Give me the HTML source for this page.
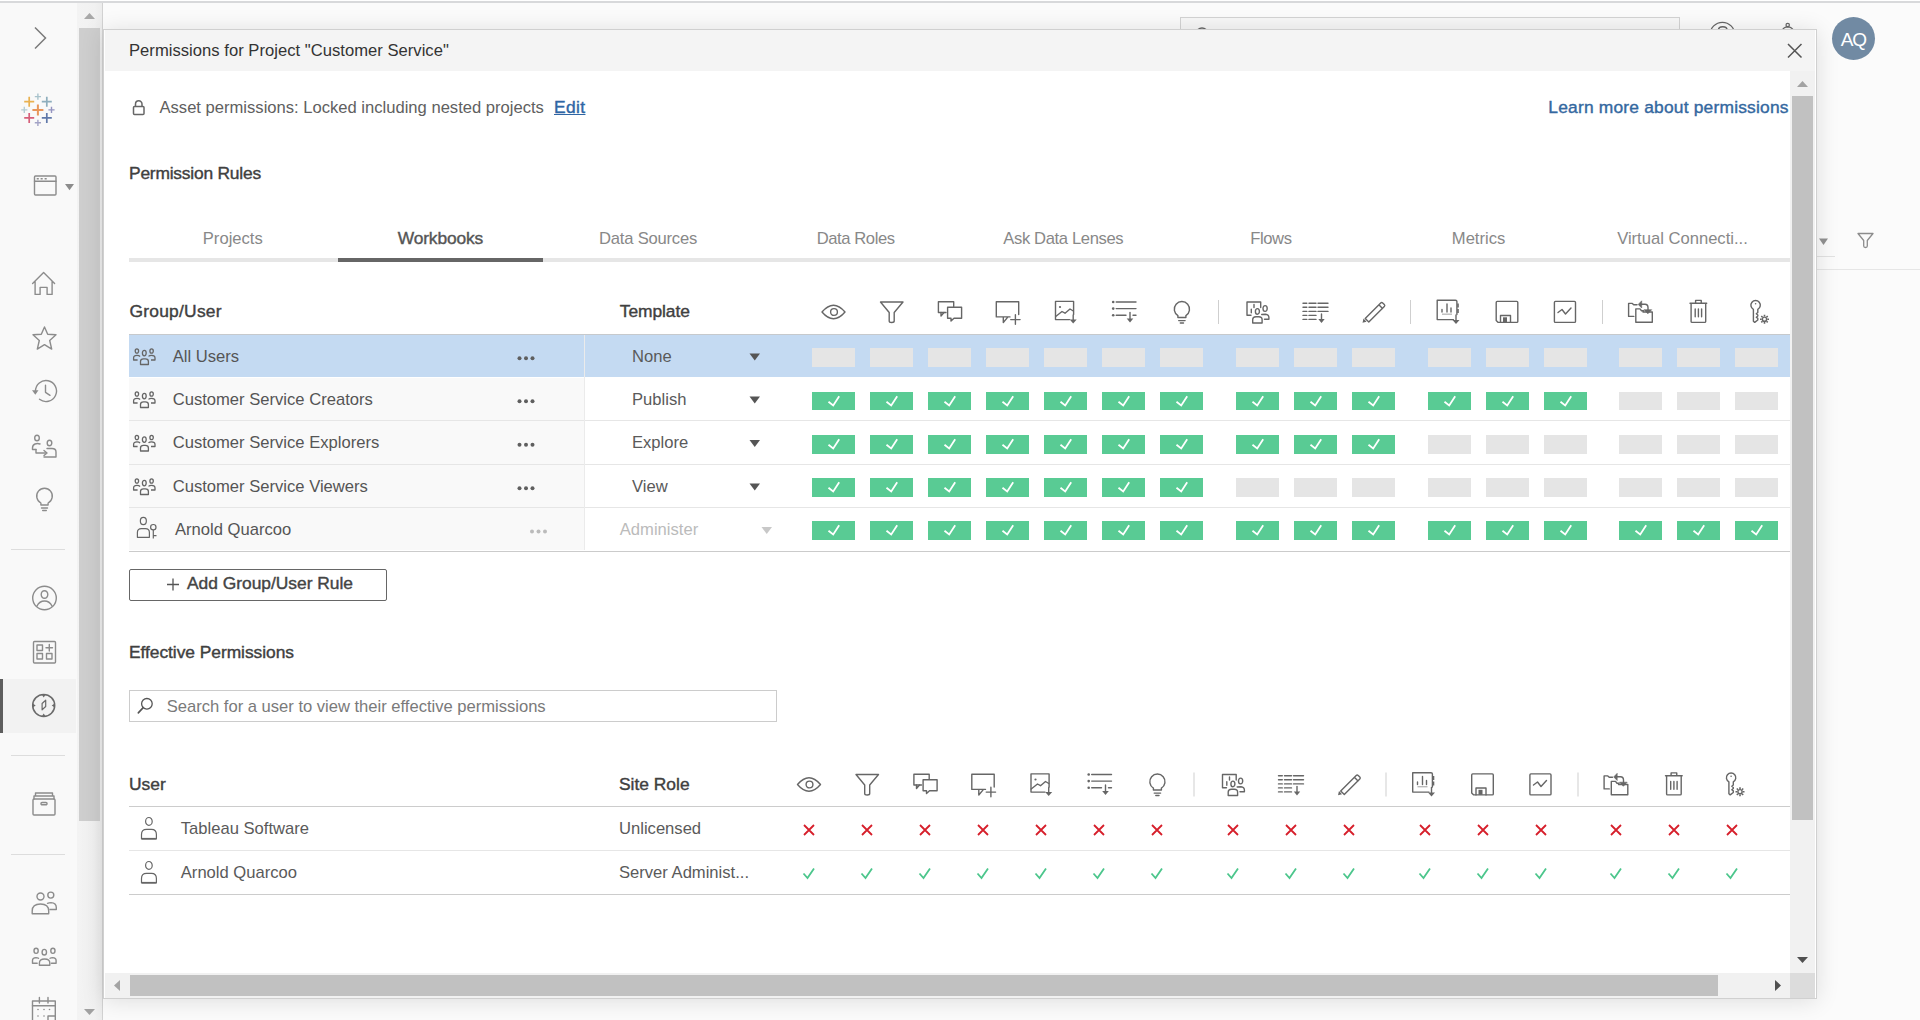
<!DOCTYPE html>
<html><head><meta charset="utf-8"><title>Permissions</title>
<style>
html,body{margin:0;padding:0;}
body{width:1920px;height:1020px;position:relative;overflow:hidden;background:#fafafa;font-family:"Liberation Sans",sans-serif;}
.r{position:absolute;}
.t{position:absolute;white-space:nowrap;line-height:1;}
svg.ov{position:absolute;left:0;top:0;}
</style></head><body>
<div class="r" style="left:0;top:0;width:1920px;height:1020px;background:#fbfbfb"></div>
<div class="r" style="left:0px;top:0px;width:1920px;height:1px;background:#ffffff;"></div>
<div class="r" style="left:0px;top:1px;width:1920px;height:2px;background:#d8d9db;"></div>
<div class="r" style="left:0px;top:3px;width:77px;height:1017px;background:#f9f9f9;"></div>
<div class="r" style="left:77px;top:3px;width:25px;height:1017px;background:linear-gradient(90deg,#f3f3f3,#f1f1f1 70%,#ececec);"></div>
<div class="r" style="left:79px;top:28px;width:21px;height:793px;background:#cecece;"></div>
<div class="r" style="left:102px;top:3px;width:1px;height:1017px;background:#d2d2d2;"></div>
<div class="r" style="left:0px;top:679px;width:76px;height:54px;background:#f2f2f2;"></div>
<div class="r" style="left:0px;top:679px;width:3px;height:54px;background:#5d5d5d;"></div>
<div class="r" style="left:11px;top:549px;width:54px;height:1px;background:#dddddd;"></div>
<div class="r" style="left:11px;top:755px;width:54px;height:1px;background:#dddddd;"></div>
<div class="r" style="left:11px;top:854px;width:54px;height:1px;background:#dddddd;"></div>
<div class="r" style="left:1180px;top:17px;width:500px;height:14px;background:#f7f7f7;border:1px solid #d3d3d3;border-bottom:none;box-sizing:border-box"></div>
<div class="r" style="left:1816px;top:269px;width:104px;height:1px;background:#e6e6e6;"></div>
<div class="r" style="left:1816px;top:256px;width:19px;height:1px;background:#e2e2e2;"></div>
<div class="r" style="left:1832px;top:17px;width:43px;height:43px;border-radius:50%;background:#718aa3"></div>
<div class="t" style="left:1840.65px;top:29.51px;font-size:19px;color:#ffffff;letter-spacing:-0.976px;">AQ</div>
<svg class="ov" width="1920" height="1020" viewBox="0 0 1920 1020"><circle cx="1722.4" cy="34.6" r="12.3" fill="none" stroke="#666" stroke-width="1.3"/><path d="M1718.5 30 Q1718.5 26.8 1722.8 26.8 Q1727 26.8 1727 30" fill="none" stroke="#666" stroke-width="1.5"/><circle cx="1787.7" cy="25" r="1.7" fill="none" stroke="#666" stroke-width="1.2"/><path d="M1781.5 31 Q1783.5 27 1787.7 26.8 Q1792 27 1794 31" fill="none" stroke="#666" stroke-width="1.3"/><circle cx="1202" cy="33.5" r="5.5" fill="none" stroke="#666" stroke-width="1.5"/></svg>
<div class="r" style="left:103px;top:29px;width:1714px;height:970px;background:#fff;border:1px solid #d0d0d0;box-sizing:border-box;box-shadow:0 2px 22px rgba(0,0,0,0.12)"></div>
<div class="r" style="left:105px;top:30px;width:1710px;height:41px;background:#f4f4f4;"></div>
<div class="t" style="left:129.00px;top:42.64px;font-size:16.6px;color:#333;letter-spacing:0.024px;">Permissions for Project &quot;Customer Service&quot;</div>
<div class="r" style="left:1790px;top:71px;width:25px;height:902px;background:#f1f1f1;"></div>
<div class="r" style="left:1792px;top:96px;width:21px;height:724px;background:#c1c1c1;"></div>
<div class="r" style="left:105px;top:973px;width:1685px;height:25px;background:#f1f1f1;"></div>
<div class="r" style="left:130px;top:975px;width:1588px;height:21px;background:#c1c1c1;"></div>
<div class="r" style="left:1790px;top:973px;width:25px;height:25px;background:#dcdcdc;"></div>
<div class="t" style="left:159.50px;top:99.64px;font-size:16.6px;color:#606060;letter-spacing:-0.005px;">Asset permissions: Locked including nested projects</div>
<div class="t" style="left:554.00px;top:99.17px;font-size:17.4px;color:#2f66a4;-webkit-text-stroke:0.4px currentColor;letter-spacing:0.379px;text-decoration:underline;">Edit</div>
<div class="t" style="left:1548.30px;top:99.17px;font-size:17.4px;color:#34689f;-webkit-text-stroke:0.4px currentColor;letter-spacing:0.195px;">Learn more about permissions</div>
<div class="t" style="left:129.00px;top:165.17px;font-size:17.4px;color:#404040;-webkit-text-stroke:0.4px currentColor;letter-spacing:-0.211px;">Permission Rules</div>
<div class="r" style="left:129px;top:258px;width:1661px;height:4px;background:#e6e6e6;"></div>
<div class="r" style="left:338px;top:258px;width:205px;height:4px;background:#666666;"></div>
<div class="t" style="left:202.81px;top:231.24px;font-size:16.6px;color:#888;letter-spacing:0.004px;">Projects</div>
<div class="t" style="left:397.69px;top:229.77px;font-size:17.4px;color:#555;-webkit-text-stroke:0.4px currentColor;letter-spacing:-0.135px;">Workbooks</div>
<div class="t" style="left:599.06px;top:231.24px;font-size:16.6px;color:#888;letter-spacing:-0.215px;">Data Sources</div>
<div class="t" style="left:816.69px;top:231.24px;font-size:16.6px;color:#888;letter-spacing:-0.412px;">Data Roles</div>
<div class="t" style="left:1003.31px;top:231.24px;font-size:16.6px;color:#888;letter-spacing:-0.366px;">Ask Data Lenses</div>
<div class="t" style="left:1250.34px;top:231.24px;font-size:16.6px;color:#888;letter-spacing:-0.430px;">Flows</div>
<div class="t" style="left:1451.82px;top:231.24px;font-size:16.6px;color:#888;">Metrics</div>
<div class="t" style="left:1617.14px;top:231.24px;font-size:16.6px;color:#888;">Virtual Connecti...</div>
<div class="t" style="left:129.40px;top:302.77px;font-size:17.4px;color:#404040;-webkit-text-stroke:0.4px currentColor;letter-spacing:0.257px;">Group/User</div>
<div class="t" style="left:619.80px;top:302.77px;font-size:17.4px;color:#404040;-webkit-text-stroke:0.4px currentColor;letter-spacing:-0.076px;">Template</div>
<div class="r" style="left:129px;top:334px;width:1661px;height:1px;background:#c6c9cc;"></div>
<div class="r" style="left:129px;top:335px;width:1661px;height:42px;background:#c4daf2;"></div>
<div class="r" style="left:129px;top:378px;width:455px;height:42px;background:#f9f9f9;"></div>
<div class="r" style="left:129px;top:421px;width:455px;height:43px;background:#f9f9f9;"></div>
<div class="r" style="left:129px;top:465px;width:455px;height:42px;background:#f9f9f9;"></div>
<div class="r" style="left:129px;top:508px;width:455px;height:43px;background:#f9f9f9;"></div>
<div class="r" style="left:129px;top:377px;width:1661px;height:1px;background:#ffffff;"></div>
<div class="r" style="left:129px;top:420px;width:1661px;height:1px;background:#e6e6e6;"></div>
<div class="r" style="left:129px;top:464px;width:1661px;height:1px;background:#e6e6e6;"></div>
<div class="r" style="left:129px;top:507px;width:1661px;height:1px;background:#e6e6e6;"></div>
<div class="r" style="left:584px;top:335px;width:1px;height:215px;background:#ebebeb;"></div>
<div class="r" style="left:129px;top:550px;width:455px;height:1px;background:#ffffff;"></div>
<div class="r" style="left:129px;top:551px;width:1661px;height:1px;background:#cbcbcb;"></div>
<div class="r" style="left:812px;top:348px;width:43px;height:19px;background:#e5e5e5;"></div>
<div class="r" style="left:870px;top:348px;width:43px;height:19px;background:#e5e5e5;"></div>
<div class="r" style="left:928px;top:348px;width:43px;height:19px;background:#e5e5e5;"></div>
<div class="r" style="left:986px;top:348px;width:43px;height:19px;background:#e5e5e5;"></div>
<div class="r" style="left:1044px;top:348px;width:43px;height:19px;background:#e5e5e5;"></div>
<div class="r" style="left:1102px;top:348px;width:43px;height:19px;background:#e5e5e5;"></div>
<div class="r" style="left:1160px;top:348px;width:43px;height:19px;background:#e5e5e5;"></div>
<div class="r" style="left:1236px;top:348px;width:43px;height:19px;background:#e5e5e5;"></div>
<div class="r" style="left:1294px;top:348px;width:43px;height:19px;background:#e5e5e5;"></div>
<div class="r" style="left:1352px;top:348px;width:43px;height:19px;background:#e5e5e5;"></div>
<div class="r" style="left:1428px;top:348px;width:43px;height:19px;background:#e5e5e5;"></div>
<div class="r" style="left:1486px;top:348px;width:43px;height:19px;background:#e5e5e5;"></div>
<div class="r" style="left:1544px;top:348px;width:43px;height:19px;background:#e5e5e5;"></div>
<div class="r" style="left:1619px;top:348px;width:43px;height:19px;background:#e5e5e5;"></div>
<div class="r" style="left:1677px;top:348px;width:43px;height:19px;background:#e5e5e5;"></div>
<div class="r" style="left:1735px;top:348px;width:43px;height:19px;background:#e5e5e5;"></div>
<div class="r" style="left:812px;top:392px;width:43px;height:18px;background:#59cb94;"></div>
<div class="r" style="left:870px;top:392px;width:43px;height:18px;background:#59cb94;"></div>
<div class="r" style="left:928px;top:392px;width:43px;height:18px;background:#59cb94;"></div>
<div class="r" style="left:986px;top:392px;width:43px;height:18px;background:#59cb94;"></div>
<div class="r" style="left:1044px;top:392px;width:43px;height:18px;background:#59cb94;"></div>
<div class="r" style="left:1102px;top:392px;width:43px;height:18px;background:#59cb94;"></div>
<div class="r" style="left:1160px;top:392px;width:43px;height:18px;background:#59cb94;"></div>
<div class="r" style="left:1236px;top:392px;width:43px;height:18px;background:#59cb94;"></div>
<div class="r" style="left:1294px;top:392px;width:43px;height:18px;background:#59cb94;"></div>
<div class="r" style="left:1352px;top:392px;width:43px;height:18px;background:#59cb94;"></div>
<div class="r" style="left:1428px;top:392px;width:43px;height:18px;background:#59cb94;"></div>
<div class="r" style="left:1486px;top:392px;width:43px;height:18px;background:#59cb94;"></div>
<div class="r" style="left:1544px;top:392px;width:43px;height:18px;background:#59cb94;"></div>
<div class="r" style="left:1619px;top:392px;width:43px;height:18px;background:#e5e5e5;"></div>
<div class="r" style="left:1677px;top:392px;width:43px;height:18px;background:#e5e5e5;"></div>
<div class="r" style="left:1735px;top:392px;width:43px;height:18px;background:#e5e5e5;"></div>
<div class="r" style="left:812px;top:435px;width:43px;height:19px;background:#59cb94;"></div>
<div class="r" style="left:870px;top:435px;width:43px;height:19px;background:#59cb94;"></div>
<div class="r" style="left:928px;top:435px;width:43px;height:19px;background:#59cb94;"></div>
<div class="r" style="left:986px;top:435px;width:43px;height:19px;background:#59cb94;"></div>
<div class="r" style="left:1044px;top:435px;width:43px;height:19px;background:#59cb94;"></div>
<div class="r" style="left:1102px;top:435px;width:43px;height:19px;background:#59cb94;"></div>
<div class="r" style="left:1160px;top:435px;width:43px;height:19px;background:#59cb94;"></div>
<div class="r" style="left:1236px;top:435px;width:43px;height:19px;background:#59cb94;"></div>
<div class="r" style="left:1294px;top:435px;width:43px;height:19px;background:#59cb94;"></div>
<div class="r" style="left:1352px;top:435px;width:43px;height:19px;background:#59cb94;"></div>
<div class="r" style="left:1428px;top:435px;width:43px;height:19px;background:#e5e5e5;"></div>
<div class="r" style="left:1486px;top:435px;width:43px;height:19px;background:#e5e5e5;"></div>
<div class="r" style="left:1544px;top:435px;width:43px;height:19px;background:#e5e5e5;"></div>
<div class="r" style="left:1619px;top:435px;width:43px;height:19px;background:#e5e5e5;"></div>
<div class="r" style="left:1677px;top:435px;width:43px;height:19px;background:#e5e5e5;"></div>
<div class="r" style="left:1735px;top:435px;width:43px;height:19px;background:#e5e5e5;"></div>
<div class="r" style="left:812px;top:478px;width:43px;height:19px;background:#59cb94;"></div>
<div class="r" style="left:870px;top:478px;width:43px;height:19px;background:#59cb94;"></div>
<div class="r" style="left:928px;top:478px;width:43px;height:19px;background:#59cb94;"></div>
<div class="r" style="left:986px;top:478px;width:43px;height:19px;background:#59cb94;"></div>
<div class="r" style="left:1044px;top:478px;width:43px;height:19px;background:#59cb94;"></div>
<div class="r" style="left:1102px;top:478px;width:43px;height:19px;background:#59cb94;"></div>
<div class="r" style="left:1160px;top:478px;width:43px;height:19px;background:#59cb94;"></div>
<div class="r" style="left:1236px;top:478px;width:43px;height:19px;background:#e5e5e5;"></div>
<div class="r" style="left:1294px;top:478px;width:43px;height:19px;background:#e5e5e5;"></div>
<div class="r" style="left:1352px;top:478px;width:43px;height:19px;background:#e5e5e5;"></div>
<div class="r" style="left:1428px;top:478px;width:43px;height:19px;background:#e5e5e5;"></div>
<div class="r" style="left:1486px;top:478px;width:43px;height:19px;background:#e5e5e5;"></div>
<div class="r" style="left:1544px;top:478px;width:43px;height:19px;background:#e5e5e5;"></div>
<div class="r" style="left:1619px;top:478px;width:43px;height:19px;background:#e5e5e5;"></div>
<div class="r" style="left:1677px;top:478px;width:43px;height:19px;background:#e5e5e5;"></div>
<div class="r" style="left:1735px;top:478px;width:43px;height:19px;background:#e5e5e5;"></div>
<div class="r" style="left:812px;top:521px;width:43px;height:19px;background:#59cb94;"></div>
<div class="r" style="left:870px;top:521px;width:43px;height:19px;background:#59cb94;"></div>
<div class="r" style="left:928px;top:521px;width:43px;height:19px;background:#59cb94;"></div>
<div class="r" style="left:986px;top:521px;width:43px;height:19px;background:#59cb94;"></div>
<div class="r" style="left:1044px;top:521px;width:43px;height:19px;background:#59cb94;"></div>
<div class="r" style="left:1102px;top:521px;width:43px;height:19px;background:#59cb94;"></div>
<div class="r" style="left:1160px;top:521px;width:43px;height:19px;background:#59cb94;"></div>
<div class="r" style="left:1236px;top:521px;width:43px;height:19px;background:#59cb94;"></div>
<div class="r" style="left:1294px;top:521px;width:43px;height:19px;background:#59cb94;"></div>
<div class="r" style="left:1352px;top:521px;width:43px;height:19px;background:#59cb94;"></div>
<div class="r" style="left:1428px;top:521px;width:43px;height:19px;background:#59cb94;"></div>
<div class="r" style="left:1486px;top:521px;width:43px;height:19px;background:#59cb94;"></div>
<div class="r" style="left:1544px;top:521px;width:43px;height:19px;background:#59cb94;"></div>
<div class="r" style="left:1619px;top:521px;width:43px;height:19px;background:#59cb94;"></div>
<div class="r" style="left:1677px;top:521px;width:43px;height:19px;background:#59cb94;"></div>
<div class="r" style="left:1735px;top:521px;width:43px;height:19px;background:#59cb94;"></div>
<div class="t" style="left:172.70px;top:348.84px;font-size:16.6px;color:#555;">All Users</div>
<div class="t" style="left:632.00px;top:348.84px;font-size:16.6px;color:#5a5a5a;">None</div>
<div class="t" style="left:172.70px;top:392.14px;font-size:16.6px;color:#555;">Customer Service Creators</div>
<div class="t" style="left:632.00px;top:392.14px;font-size:16.6px;color:#5a5a5a;">Publish</div>
<div class="t" style="left:172.70px;top:434.94px;font-size:16.6px;color:#555;">Customer Service Explorers</div>
<div class="t" style="left:632.00px;top:434.94px;font-size:16.6px;color:#5a5a5a;">Explore</div>
<div class="t" style="left:172.70px;top:478.84px;font-size:16.6px;color:#555;">Customer Service Viewers</div>
<div class="t" style="left:632.00px;top:478.84px;font-size:16.6px;color:#5a5a5a;">View</div>
<div class="t" style="left:175.00px;top:522.04px;font-size:16.6px;color:#555;">Arnold Quarcoo</div>
<div class="t" style="left:619.80px;top:522.04px;font-size:16.6px;color:#bbb;">Administer</div>
<div class="r" style="left:129px;top:569px;width:258px;height:32px;border:1px solid #666;border-radius:2px;box-sizing:border-box;background:#fff"></div>
<div class="t" style="left:187.00px;top:575.17px;font-size:17.4px;color:#444;-webkit-text-stroke:0.4px currentColor;letter-spacing:-0.018px;">Add Group/User Rule</div>
<div class="t" style="left:129.00px;top:643.97px;font-size:17.4px;color:#404040;-webkit-text-stroke:0.4px currentColor;letter-spacing:-0.048px;">Effective Permissions</div>
<div class="r" style="left:129px;top:690px;width:648px;height:32px;border:1px solid #cccccc;box-sizing:border-box;background:#fff"></div>
<div class="t" style="left:166.80px;top:698.64px;font-size:16.6px;color:#7a7a7a;letter-spacing:-0.016px;">Search for a user to view their effective permissions</div>
<div class="t" style="left:129.00px;top:776.17px;font-size:17.4px;color:#404040;-webkit-text-stroke:0.4px currentColor;">User</div>
<div class="t" style="left:619.00px;top:776.17px;font-size:17.4px;color:#404040;-webkit-text-stroke:0.4px currentColor;">Site Role</div>
<div class="r" style="left:129px;top:806px;width:1661px;height:1px;background:#cccccc;"></div>
<div class="r" style="left:129px;top:850px;width:1661px;height:1px;background:#e6e6e6;"></div>
<div class="r" style="left:129px;top:894px;width:1661px;height:1px;background:#cccccc;"></div>
<div class="t" style="left:180.80px;top:821.14px;font-size:16.6px;color:#5a5a5a;">Tableau Software</div>
<div class="t" style="left:619.00px;top:821.14px;font-size:16.6px;color:#5a5a5a;">Unlicensed</div>
<div class="t" style="left:180.80px;top:865.14px;font-size:16.6px;color:#5a5a5a;">Arnold Quarcoo</div>
<div class="t" style="left:619.00px;top:865.14px;font-size:16.6px;color:#5a5a5a;">Server Administ...</div>
<svg class="ov" width="1920" height="1020" viewBox="0 0 1920 1020">
<path d="M1788 44 L1801.5 57.5 M1801.5 44 L1788 57.5" stroke="#555" stroke-width="1.5" fill="none"/>
<path d="M1797 87 L1808 87 L1802.5 81 Z" fill="#a3a3a3"/>
<path d="M1797 957 L1808 957 L1802.5 963 Z" fill="#505050"/>
<path d="M120 980 L120 991 L114 985.5 Z" fill="#a3a3a3"/>
<path d="M1775 980 L1775 991 L1781 985.5 Z" fill="#505050"/>
<rect x="133.5" y="106.5" width="10.5" height="8" rx="1" fill="none" stroke="#666" stroke-width="1.5"/>
<path d="M135.5 106.5 V104 A3.25 3.25 0 0 1 142 104 V106.5" fill="none" stroke="#666" stroke-width="1.5"/>
<path d="M828.5 401.8 L833.2 405.4 L839.2 396.2" fill="none" stroke="#fff" stroke-width="1.8"/>
<path d="M886.5 401.8 L891.2 405.4 L897.2 396.2" fill="none" stroke="#fff" stroke-width="1.8"/>
<path d="M944.5 401.8 L949.2 405.4 L955.2 396.2" fill="none" stroke="#fff" stroke-width="1.8"/>
<path d="M1002.5 401.8 L1007.2 405.4 L1013.2 396.2" fill="none" stroke="#fff" stroke-width="1.8"/>
<path d="M1060.5 401.8 L1065.2 405.4 L1071.2 396.2" fill="none" stroke="#fff" stroke-width="1.8"/>
<path d="M1118.5 401.8 L1123.2 405.4 L1129.2 396.2" fill="none" stroke="#fff" stroke-width="1.8"/>
<path d="M1176.5 401.8 L1181.2 405.4 L1187.2 396.2" fill="none" stroke="#fff" stroke-width="1.8"/>
<path d="M1252.5 401.8 L1257.2 405.4 L1263.2 396.2" fill="none" stroke="#fff" stroke-width="1.8"/>
<path d="M1310.5 401.8 L1315.2 405.4 L1321.2 396.2" fill="none" stroke="#fff" stroke-width="1.8"/>
<path d="M1368.5 401.8 L1373.2 405.4 L1379.2 396.2" fill="none" stroke="#fff" stroke-width="1.8"/>
<path d="M1444.5 401.8 L1449.2 405.4 L1455.2 396.2" fill="none" stroke="#fff" stroke-width="1.8"/>
<path d="M1502.5 401.8 L1507.2 405.4 L1513.2 396.2" fill="none" stroke="#fff" stroke-width="1.8"/>
<path d="M1560.5 401.8 L1565.2 405.4 L1571.2 396.2" fill="none" stroke="#fff" stroke-width="1.8"/>
<path d="M828.5 444.8 L833.2 448.4 L839.2 439.2" fill="none" stroke="#fff" stroke-width="1.8"/>
<path d="M886.5 444.8 L891.2 448.4 L897.2 439.2" fill="none" stroke="#fff" stroke-width="1.8"/>
<path d="M944.5 444.8 L949.2 448.4 L955.2 439.2" fill="none" stroke="#fff" stroke-width="1.8"/>
<path d="M1002.5 444.8 L1007.2 448.4 L1013.2 439.2" fill="none" stroke="#fff" stroke-width="1.8"/>
<path d="M1060.5 444.8 L1065.2 448.4 L1071.2 439.2" fill="none" stroke="#fff" stroke-width="1.8"/>
<path d="M1118.5 444.8 L1123.2 448.4 L1129.2 439.2" fill="none" stroke="#fff" stroke-width="1.8"/>
<path d="M1176.5 444.8 L1181.2 448.4 L1187.2 439.2" fill="none" stroke="#fff" stroke-width="1.8"/>
<path d="M1252.5 444.8 L1257.2 448.4 L1263.2 439.2" fill="none" stroke="#fff" stroke-width="1.8"/>
<path d="M1310.5 444.8 L1315.2 448.4 L1321.2 439.2" fill="none" stroke="#fff" stroke-width="1.8"/>
<path d="M1368.5 444.8 L1373.2 448.4 L1379.2 439.2" fill="none" stroke="#fff" stroke-width="1.8"/>
<path d="M828.5 487.8 L833.2 491.4 L839.2 482.2" fill="none" stroke="#fff" stroke-width="1.8"/>
<path d="M886.5 487.8 L891.2 491.4 L897.2 482.2" fill="none" stroke="#fff" stroke-width="1.8"/>
<path d="M944.5 487.8 L949.2 491.4 L955.2 482.2" fill="none" stroke="#fff" stroke-width="1.8"/>
<path d="M1002.5 487.8 L1007.2 491.4 L1013.2 482.2" fill="none" stroke="#fff" stroke-width="1.8"/>
<path d="M1060.5 487.8 L1065.2 491.4 L1071.2 482.2" fill="none" stroke="#fff" stroke-width="1.8"/>
<path d="M1118.5 487.8 L1123.2 491.4 L1129.2 482.2" fill="none" stroke="#fff" stroke-width="1.8"/>
<path d="M1176.5 487.8 L1181.2 491.4 L1187.2 482.2" fill="none" stroke="#fff" stroke-width="1.8"/>
<path d="M828.5 530.8 L833.2 534.4 L839.2 525.2" fill="none" stroke="#fff" stroke-width="1.8"/>
<path d="M886.5 530.8 L891.2 534.4 L897.2 525.2" fill="none" stroke="#fff" stroke-width="1.8"/>
<path d="M944.5 530.8 L949.2 534.4 L955.2 525.2" fill="none" stroke="#fff" stroke-width="1.8"/>
<path d="M1002.5 530.8 L1007.2 534.4 L1013.2 525.2" fill="none" stroke="#fff" stroke-width="1.8"/>
<path d="M1060.5 530.8 L1065.2 534.4 L1071.2 525.2" fill="none" stroke="#fff" stroke-width="1.8"/>
<path d="M1118.5 530.8 L1123.2 534.4 L1129.2 525.2" fill="none" stroke="#fff" stroke-width="1.8"/>
<path d="M1176.5 530.8 L1181.2 534.4 L1187.2 525.2" fill="none" stroke="#fff" stroke-width="1.8"/>
<path d="M1252.5 530.8 L1257.2 534.4 L1263.2 525.2" fill="none" stroke="#fff" stroke-width="1.8"/>
<path d="M1310.5 530.8 L1315.2 534.4 L1321.2 525.2" fill="none" stroke="#fff" stroke-width="1.8"/>
<path d="M1368.5 530.8 L1373.2 534.4 L1379.2 525.2" fill="none" stroke="#fff" stroke-width="1.8"/>
<path d="M1444.5 530.8 L1449.2 534.4 L1455.2 525.2" fill="none" stroke="#fff" stroke-width="1.8"/>
<path d="M1502.5 530.8 L1507.2 534.4 L1513.2 525.2" fill="none" stroke="#fff" stroke-width="1.8"/>
<path d="M1560.5 530.8 L1565.2 534.4 L1571.2 525.2" fill="none" stroke="#fff" stroke-width="1.8"/>
<path d="M1635.5 530.8 L1640.2 534.4 L1646.2 525.2" fill="none" stroke="#fff" stroke-width="1.8"/>
<path d="M1693.5 530.8 L1698.2 534.4 L1704.2 525.2" fill="none" stroke="#fff" stroke-width="1.8"/>
<path d="M1751.5 530.8 L1756.2 534.4 L1762.2 525.2" fill="none" stroke="#fff" stroke-width="1.8"/>
<path d="M749.5 353.5 L760 353.5 L754.75 360.5 Z" fill="#555"/>
<circle cx="519.5" cy="358.2" r="2" fill="#5f5f5f"/>
<circle cx="526.0" cy="358.2" r="2" fill="#5f5f5f"/>
<circle cx="532.5" cy="358.2" r="2" fill="#5f5f5f"/>
<path d="M749.5 396.5 L760 396.5 L754.75 403.5 Z" fill="#555"/>
<circle cx="519.5" cy="401.2" r="2" fill="#5f5f5f"/>
<circle cx="526.0" cy="401.2" r="2" fill="#5f5f5f"/>
<circle cx="532.5" cy="401.2" r="2" fill="#5f5f5f"/>
<path d="M749.5 440.0 L760 440.0 L754.75 447.0 Z" fill="#555"/>
<circle cx="519.5" cy="444.7" r="2" fill="#5f5f5f"/>
<circle cx="526.0" cy="444.7" r="2" fill="#5f5f5f"/>
<circle cx="532.5" cy="444.7" r="2" fill="#5f5f5f"/>
<path d="M749.5 483.5 L760 483.5 L754.75 490.5 Z" fill="#555"/>
<circle cx="519.5" cy="488.2" r="2" fill="#5f5f5f"/>
<circle cx="526.0" cy="488.2" r="2" fill="#5f5f5f"/>
<circle cx="532.5" cy="488.2" r="2" fill="#5f5f5f"/>
<path d="M761.5 527.0 L772 527.0 L766.75 534.0 Z" fill="#c8c8c8"/>
<circle cx="532.0" cy="531.5" r="2" fill="#bbb"/>
<circle cx="538.5" cy="531.5" r="2" fill="#bbb"/>
<circle cx="545.0" cy="531.5" r="2" fill="#bbb"/>
<path d="M173 578.5 V590.5 M167 584.5 H179" stroke="#555" stroke-width="1.3"/>
<circle cx="146.9" cy="703.8" r="5.3" fill="none" stroke="#555" stroke-width="1.3"/><path d="M143.2 707.6 L138.3 712.9" stroke="#555" stroke-width="1.6" stroke-linecap="round"/>
<path d="M804.0 825 L814.0 835 M814.0 825 L804.0 835" stroke="#d61f2b" stroke-width="1.8" fill="none"/>
<path d="M803.5 873.5 L807.5 878 L814.0 868.5" stroke="#4cc68c" stroke-width="1.8" fill="none"/>
<path d="M862.0 825 L872.0 835 M872.0 825 L862.0 835" stroke="#d61f2b" stroke-width="1.8" fill="none"/>
<path d="M861.5 873.5 L865.5 878 L872.0 868.5" stroke="#4cc68c" stroke-width="1.8" fill="none"/>
<path d="M920.0 825 L930.0 835 M930.0 825 L920.0 835" stroke="#d61f2b" stroke-width="1.8" fill="none"/>
<path d="M919.5 873.5 L923.5 878 L930.0 868.5" stroke="#4cc68c" stroke-width="1.8" fill="none"/>
<path d="M978.0 825 L988.0 835 M988.0 825 L978.0 835" stroke="#d61f2b" stroke-width="1.8" fill="none"/>
<path d="M977.5 873.5 L981.5 878 L988.0 868.5" stroke="#4cc68c" stroke-width="1.8" fill="none"/>
<path d="M1036.0 825 L1046.0 835 M1046.0 825 L1036.0 835" stroke="#d61f2b" stroke-width="1.8" fill="none"/>
<path d="M1035.5 873.5 L1039.5 878 L1046.0 868.5" stroke="#4cc68c" stroke-width="1.8" fill="none"/>
<path d="M1094.0 825 L1104.0 835 M1104.0 825 L1094.0 835" stroke="#d61f2b" stroke-width="1.8" fill="none"/>
<path d="M1093.5 873.5 L1097.5 878 L1104.0 868.5" stroke="#4cc68c" stroke-width="1.8" fill="none"/>
<path d="M1152.0 825 L1162.0 835 M1162.0 825 L1152.0 835" stroke="#d61f2b" stroke-width="1.8" fill="none"/>
<path d="M1151.5 873.5 L1155.5 878 L1162.0 868.5" stroke="#4cc68c" stroke-width="1.8" fill="none"/>
<path d="M1228.0 825 L1238.0 835 M1238.0 825 L1228.0 835" stroke="#d61f2b" stroke-width="1.8" fill="none"/>
<path d="M1227.5 873.5 L1231.5 878 L1238.0 868.5" stroke="#4cc68c" stroke-width="1.8" fill="none"/>
<path d="M1286.0 825 L1296.0 835 M1296.0 825 L1286.0 835" stroke="#d61f2b" stroke-width="1.8" fill="none"/>
<path d="M1285.5 873.5 L1289.5 878 L1296.0 868.5" stroke="#4cc68c" stroke-width="1.8" fill="none"/>
<path d="M1344.0 825 L1354.0 835 M1354.0 825 L1344.0 835" stroke="#d61f2b" stroke-width="1.8" fill="none"/>
<path d="M1343.5 873.5 L1347.5 878 L1354.0 868.5" stroke="#4cc68c" stroke-width="1.8" fill="none"/>
<path d="M1420.0 825 L1430.0 835 M1430.0 825 L1420.0 835" stroke="#d61f2b" stroke-width="1.8" fill="none"/>
<path d="M1419.5 873.5 L1423.5 878 L1430.0 868.5" stroke="#4cc68c" stroke-width="1.8" fill="none"/>
<path d="M1478.0 825 L1488.0 835 M1488.0 825 L1478.0 835" stroke="#d61f2b" stroke-width="1.8" fill="none"/>
<path d="M1477.5 873.5 L1481.5 878 L1488.0 868.5" stroke="#4cc68c" stroke-width="1.8" fill="none"/>
<path d="M1536.0 825 L1546.0 835 M1546.0 825 L1536.0 835" stroke="#d61f2b" stroke-width="1.8" fill="none"/>
<path d="M1535.5 873.5 L1539.5 878 L1546.0 868.5" stroke="#4cc68c" stroke-width="1.8" fill="none"/>
<path d="M1611.0 825 L1621.0 835 M1621.0 825 L1611.0 835" stroke="#d61f2b" stroke-width="1.8" fill="none"/>
<path d="M1610.5 873.5 L1614.5 878 L1621.0 868.5" stroke="#4cc68c" stroke-width="1.8" fill="none"/>
<path d="M1669.0 825 L1679.0 835 M1679.0 825 L1669.0 835" stroke="#d61f2b" stroke-width="1.8" fill="none"/>
<path d="M1668.5 873.5 L1672.5 878 L1679.0 868.5" stroke="#4cc68c" stroke-width="1.8" fill="none"/>
<path d="M1727.0 825 L1737.0 835 M1737.0 825 L1727.0 835" stroke="#d61f2b" stroke-width="1.8" fill="none"/>
<path d="M1726.5 873.5 L1730.5 878 L1737.0 868.5" stroke="#4cc68c" stroke-width="1.8" fill="none"/>
<g transform="translate(833.5,312)"><path d="M-11.5 0 Q0 -13.5 11.5 0 Q0 13.5 -11.5 0 Z" fill="none" stroke="#666" stroke-width="1.4" stroke-linejoin="round" stroke-linecap="round"/><circle cx="0.5" cy="0" r="3.4" fill="none" stroke="#666" stroke-width="1.4" stroke-linejoin="round" stroke-linecap="round"/></g>
<g transform="translate(891.5,312)"><path d="M-11 -10 L11.5 -10 L2.7 0.5 L2.7 9 Q2.7 10.5 0.2 10.5 Q-2.3 10.5 -2.3 9 L-2.3 0.5 Z" fill="none" stroke="#666" stroke-width="1.4" stroke-linejoin="round" stroke-linecap="round"/></g>
<g transform="translate(949.5,312)"><path d="M-1.9 -4.8 H12.1 V6.2 H4.5 L1.5 9 V6.2 H-1.9 Z" fill="none" stroke="#666" stroke-width="1.4" stroke-linejoin="round" stroke-linecap="round"/><path d="M-3.5 0.5 H-11.1 V-10.2 H4.2 V-5.5" fill="none" stroke="#666" stroke-width="1.4" stroke-linejoin="round" stroke-linecap="round"/><path d="M-8.5 0.5 V4 L-5.5 0.5" fill="none" stroke="#666" stroke-width="1.4" stroke-linejoin="round" stroke-linecap="round"/></g>
<g transform="translate(1007.5,312)"><path d="M2.5 4.9 H-4.2 V10.5 L0.5 4.9 M-4.2 4.9 H-11.2 V-10.2 H11.2 V2.5" fill="none" stroke="#666" stroke-width="1.4" stroke-linejoin="round" stroke-linecap="round"/><path d="M7.9 2.8 V12.2 M3.2 7.6 H12.6" fill="none" stroke="#666" stroke-width="1.4" stroke-linejoin="round" stroke-linecap="round"/></g>
<g transform="translate(1065.5,312)"><path d="M4 7.6 H-10 V-10.6 H8.1 V2.5" fill="none" stroke="#666" stroke-width="1.4" stroke-linejoin="round" stroke-linecap="round"/><circle cx="-5.5" cy="-5" r="1.1" fill="#666"/><path d="M-9.8 4.5 L-3.5 -0.5 L-0.5 1.2 L4.5 -3 L7.8 -1" fill="none" stroke="#666" stroke-width="1.4" stroke-linejoin="round" stroke-linecap="round"/><path d="M7.7 3 V8" fill="none" stroke="#666" stroke-width="1.4" stroke-linejoin="round" stroke-linecap="round"/><path d="M4.2 7.5 H11.2 L7.7 11.5 Z" fill="#666"/></g>
<g transform="translate(1123.5,312)"><circle cx="-10.3" cy="-10" r="1.3" fill="#666"/><circle cx="-10.3" cy="-3.4" r="1.3" fill="#666"/><circle cx="-10.3" cy="3.2" r="1.3" fill="#666"/><path d="M-7.3 -10 H12.5 M-7.3 -3.4 H12.5 M-7.3 3.2 H2.5 M9.5 3.2 H12.5" fill="none" stroke="#666" stroke-width="1.4" stroke-linejoin="round" stroke-linecap="round"/><path d="M6.5 0.5 V7" fill="none" stroke="#666" stroke-width="1.4" stroke-linejoin="round" stroke-linecap="round"/><path d="M3.2 6.5 H9.8 L6.5 10.5 Z" fill="#666"/></g>
<g transform="translate(1181.5,312)"><path d="M-3.6 5.5 V3.6 A7.6 7.6 0 1 1 4.4 3.6 V5.5 Z" fill="none" stroke="#666" stroke-width="1.4" stroke-linejoin="round" stroke-linecap="round"/><path d="M-2.8 8.6 H3.6 M-1.2 11 H2" fill="none" stroke="#666" stroke-width="1.4" stroke-linejoin="round" stroke-linecap="round"/></g>
<g transform="translate(1257.5,312)"><path d="M-6.5 3.2 H-10.5 V-10 H3.2 V-4.5" fill="none" stroke="#666" stroke-width="1.4" stroke-linejoin="round" stroke-linecap="round"/><path d="M-3.5 -7.5 V-4.5 M-6.2 -2.8 V0.8" fill="none" stroke="#666" stroke-width="1.4" stroke-linejoin="round" stroke-linecap="round"/><ellipse cx="-0.1" cy="-0.6" rx="2" ry="2.8" fill="none" stroke="#666" stroke-width="1.4" stroke-linejoin="round" stroke-linecap="round"/><ellipse cx="7.6" cy="-3.5" rx="2.1" ry="2.9" fill="none" stroke="#666" stroke-width="1.4" stroke-linejoin="round" stroke-linecap="round"/><path d="M-4.8 11 V7.5 Q-4.8 4.7 -1.5 4.7 H1.3 Q4.6 4.7 4.6 7.5 V11 Z" fill="none" stroke="#666" stroke-width="1.4" stroke-linejoin="round" stroke-linecap="round"/><path d="M4.2 2.5 Q6 2.2 8 2.2 Q11.4 2.5 11.4 5.5 V7.2 H7" fill="none" stroke="#666" stroke-width="1.4" stroke-linejoin="round" stroke-linecap="round"/></g>
<g transform="translate(1315.5,312)"><path d="M-12.5 -8.7 H-8.7 M-6.5 -8.7 H0.5 M2.5 -8.7 H12.5 M-12.5 -4.7 H-8.7 M-6.5 -4.7 H0.5 M2.5 -4.7 H12.5 M-12.5 -0.6 H-8.7 M-6.5 -0.6 H0.5 M2.5 -0.6 H12.5 M-12.5 3.4 H-8.7 M-6.5 3.4 H0.5 M-12.5 7.4 H-8.7 M-6.5 7.4 H0.5" fill="none" stroke="#666" stroke-width="1.4" stroke-linejoin="round" stroke-linecap="round"/><path d="M6 2 V7.5" fill="none" stroke="#666" stroke-width="1.4" stroke-linejoin="round" stroke-linecap="round"/><path d="M2.8 7 H9.2 L6 11 Z" fill="#666"/></g>
<g transform="translate(1373.5,312)"><path d="M-8.3 6.5 L7.2 -9 Q8.2 -10 9.2 -9 L10.8 -7.4 Q11.8 -6.4 10.8 -5.4 L-4.7 10.1 Z M5.4 -7.2 L9 -3.6" fill="none" stroke="#666" stroke-width="1.4" stroke-linejoin="round" stroke-linecap="round"/><path d="M-11 10.7 L-10 6.6 L-7 9.7 Z" fill="#666"/></g>
<g transform="translate(1449.5,312)"><path d="M4 7.6 H-12.3 V-11.8 H6 Q7.4 -11.8 7.4 -10.4 V2.5" fill="none" stroke="#666" stroke-width="1.4" stroke-linejoin="round" stroke-linecap="round"/><path d="M-7.5 -2.5 V0 M-2.5 -8 V0 M1.5 -4 V0" fill="none" stroke="#666" stroke-width="1.4" stroke-linejoin="round" stroke-linecap="round"/><path d="M-7.5 2.2 H2.5" stroke="#bbb" stroke-width="1.4"/><path d="M8.5 -8.5 V-4.5 M8.5 -3 V1" stroke="#666" stroke-width="1.6"/><path d="M6.5 3 V8.5" fill="none" stroke="#666" stroke-width="1.4" stroke-linejoin="round" stroke-linecap="round"/><path d="M3 8 H10 L6.5 12 Z" fill="#666"/></g>
<g transform="translate(1507.5,312)"><path d="M-9.3 10.4 L-11.3 8.4 V-9.6 Q-11.3 -10.6 -10.3 -10.6 H9.3 Q10.3 -10.6 10.3 -9.6 V9.4 Q10.3 10.4 9.3 10.4 Z" fill="none" stroke="#666" stroke-width="1.4" stroke-linejoin="round" stroke-linecap="round"/><path d="M-7 10.4 V3.5 H3 V10.4" fill="none" stroke="#666" stroke-width="1.4" stroke-linejoin="round" stroke-linecap="round"/><rect x="-4.5" y="5.3" width="4" height="5" fill="#666"/></g>
<g transform="translate(1565.5,312)"><rect x="-11.1" y="-10.6" width="21.1" height="21" rx="1" fill="none" stroke="#666" stroke-width="1.4" stroke-linejoin="round" stroke-linecap="round"/><path d="M-7.5 0.5 L-3.5 -2.5 L0 2 L5.5 -4" fill="none" stroke="#666" stroke-width="1.4" stroke-linejoin="round" stroke-linecap="round"/></g>
<g transform="translate(1640.5,312)"><path d="M-6.7 4.4 H-11.9 V-8.6 H-8.2 L-6.75 -7.2 H-3.5" fill="none" stroke="#666" stroke-width="1.4" stroke-linejoin="round" stroke-linecap="round"/><path d="M-4.7 10.2 H11.8 V0 H2.5 M-4.7 10.2 V-3.1 H-0.5 L1 -1.2 H3" fill="none" stroke="#666" stroke-width="1.4" stroke-linejoin="round" stroke-linecap="round"/><path d="M0.5 -7.8 H4.5 Q7.5 -7.8 7.5 -4.5 V-2" fill="none" stroke="#666" stroke-width="1.4" stroke-linejoin="round" stroke-linecap="round"/><path d="M-2.3 -7.6 L1.2 -11.2 V-4 Z" fill="#666" stroke="#666" stroke-width="0.6" stroke-linejoin="round"/><path d="M3.5 -2.3 H11.2 L7.35 1.8 Z" fill="#666" stroke="#666" stroke-width="0.6" stroke-linejoin="round"/></g>
<g transform="translate(1698.5,312)"><path d="M-8.5 -8.8 H8.2 M-7.4 -8.8 V9.4 Q-7.4 10.4 -6.4 10.4 H6.2 Q7.2 10.4 7.2 9.4 V-8.8 M-2.9 -8.8 V-11.6 H2.75 V-8.8" fill="none" stroke="#666" stroke-width="1.4" stroke-linejoin="round" stroke-linecap="round"/><path d="M-3.3 -3 V4.75 M-0.1 -3 V4.75 M3.1 -3 V4.75" fill="none" stroke="#666" stroke-width="1.4" stroke-linejoin="round" stroke-linecap="round"/></g>
<g transform="translate(1756.5,312)"><path d="M-3.1 -2.6 A4.7 4.7 0 1 1 1.3 -2.6 V0.5 L-0.2 1.8 L1.3 3 V4 L-0.2 5.2 L1.3 6.4 V8 L-1.8 10.4 L-3.1 9.3 Z" fill="none" stroke="#666" stroke-width="1.4" stroke-linejoin="round" stroke-linecap="round"/><circle cx="-0.9" cy="-8.3" r="0.8" fill="#666"/><circle cx="8" cy="7.2" r="2.1" fill="none" stroke="#666" stroke-width="1.4" stroke-linejoin="round" stroke-linecap="round"/><path d="M8 2.7 V4.4 M8 10 V11.7 M3.5 7.2 H5.2 M10.8 7.2 H12.5 M4.8 4 L6 5.2 M10 9.2 L11.2 10.4 M11.2 4 L10 5.2 M6 9.2 L4.8 10.4" stroke="#666" stroke-width="1.6"/></g>
<path d="M1218.5 300 V324" stroke="#cfcfcf" stroke-width="1"/>
<path d="M1410.5 300 V324" stroke="#cfcfcf" stroke-width="1"/>
<path d="M1602.5 300 V324" stroke="#cfcfcf" stroke-width="1"/>
<g transform="translate(809.0,784.5)"><path d="M-11.5 0 Q0 -13.5 11.5 0 Q0 13.5 -11.5 0 Z" fill="none" stroke="#666" stroke-width="1.4" stroke-linejoin="round" stroke-linecap="round"/><circle cx="0.5" cy="0" r="3.4" fill="none" stroke="#666" stroke-width="1.4" stroke-linejoin="round" stroke-linecap="round"/></g>
<g transform="translate(867.0,784.5)"><path d="M-11 -10 L11.5 -10 L2.7 0.5 L2.7 9 Q2.7 10.5 0.2 10.5 Q-2.3 10.5 -2.3 9 L-2.3 0.5 Z" fill="none" stroke="#666" stroke-width="1.4" stroke-linejoin="round" stroke-linecap="round"/></g>
<g transform="translate(925.0,784.5)"><path d="M-1.9 -4.8 H12.1 V6.2 H4.5 L1.5 9 V6.2 H-1.9 Z" fill="none" stroke="#666" stroke-width="1.4" stroke-linejoin="round" stroke-linecap="round"/><path d="M-3.5 0.5 H-11.1 V-10.2 H4.2 V-5.5" fill="none" stroke="#666" stroke-width="1.4" stroke-linejoin="round" stroke-linecap="round"/><path d="M-8.5 0.5 V4 L-5.5 0.5" fill="none" stroke="#666" stroke-width="1.4" stroke-linejoin="round" stroke-linecap="round"/></g>
<g transform="translate(983.0,784.5)"><path d="M2.5 4.9 H-4.2 V10.5 L0.5 4.9 M-4.2 4.9 H-11.2 V-10.2 H11.2 V2.5" fill="none" stroke="#666" stroke-width="1.4" stroke-linejoin="round" stroke-linecap="round"/><path d="M7.9 2.8 V12.2 M3.2 7.6 H12.6" fill="none" stroke="#666" stroke-width="1.4" stroke-linejoin="round" stroke-linecap="round"/></g>
<g transform="translate(1041.0,784.5)"><path d="M4 7.6 H-10 V-10.6 H8.1 V2.5" fill="none" stroke="#666" stroke-width="1.4" stroke-linejoin="round" stroke-linecap="round"/><circle cx="-5.5" cy="-5" r="1.1" fill="#666"/><path d="M-9.8 4.5 L-3.5 -0.5 L-0.5 1.2 L4.5 -3 L7.8 -1" fill="none" stroke="#666" stroke-width="1.4" stroke-linejoin="round" stroke-linecap="round"/><path d="M7.7 3 V8" fill="none" stroke="#666" stroke-width="1.4" stroke-linejoin="round" stroke-linecap="round"/><path d="M4.2 7.5 H11.2 L7.7 11.5 Z" fill="#666"/></g>
<g transform="translate(1099.0,784.5)"><circle cx="-10.3" cy="-10" r="1.3" fill="#666"/><circle cx="-10.3" cy="-3.4" r="1.3" fill="#666"/><circle cx="-10.3" cy="3.2" r="1.3" fill="#666"/><path d="M-7.3 -10 H12.5 M-7.3 -3.4 H12.5 M-7.3 3.2 H2.5 M9.5 3.2 H12.5" fill="none" stroke="#666" stroke-width="1.4" stroke-linejoin="round" stroke-linecap="round"/><path d="M6.5 0.5 V7" fill="none" stroke="#666" stroke-width="1.4" stroke-linejoin="round" stroke-linecap="round"/><path d="M3.2 6.5 H9.8 L6.5 10.5 Z" fill="#666"/></g>
<g transform="translate(1157.0,784.5)"><path d="M-3.6 5.5 V3.6 A7.6 7.6 0 1 1 4.4 3.6 V5.5 Z" fill="none" stroke="#666" stroke-width="1.4" stroke-linejoin="round" stroke-linecap="round"/><path d="M-2.8 8.6 H3.6 M-1.2 11 H2" fill="none" stroke="#666" stroke-width="1.4" stroke-linejoin="round" stroke-linecap="round"/></g>
<g transform="translate(1233.0,784.5)"><path d="M-6.5 3.2 H-10.5 V-10 H3.2 V-4.5" fill="none" stroke="#666" stroke-width="1.4" stroke-linejoin="round" stroke-linecap="round"/><path d="M-3.5 -7.5 V-4.5 M-6.2 -2.8 V0.8" fill="none" stroke="#666" stroke-width="1.4" stroke-linejoin="round" stroke-linecap="round"/><ellipse cx="-0.1" cy="-0.6" rx="2" ry="2.8" fill="none" stroke="#666" stroke-width="1.4" stroke-linejoin="round" stroke-linecap="round"/><ellipse cx="7.6" cy="-3.5" rx="2.1" ry="2.9" fill="none" stroke="#666" stroke-width="1.4" stroke-linejoin="round" stroke-linecap="round"/><path d="M-4.8 11 V7.5 Q-4.8 4.7 -1.5 4.7 H1.3 Q4.6 4.7 4.6 7.5 V11 Z" fill="none" stroke="#666" stroke-width="1.4" stroke-linejoin="round" stroke-linecap="round"/><path d="M4.2 2.5 Q6 2.2 8 2.2 Q11.4 2.5 11.4 5.5 V7.2 H7" fill="none" stroke="#666" stroke-width="1.4" stroke-linejoin="round" stroke-linecap="round"/></g>
<g transform="translate(1291.0,784.5)"><path d="M-12.5 -8.7 H-8.7 M-6.5 -8.7 H0.5 M2.5 -8.7 H12.5 M-12.5 -4.7 H-8.7 M-6.5 -4.7 H0.5 M2.5 -4.7 H12.5 M-12.5 -0.6 H-8.7 M-6.5 -0.6 H0.5 M2.5 -0.6 H12.5 M-12.5 3.4 H-8.7 M-6.5 3.4 H0.5 M-12.5 7.4 H-8.7 M-6.5 7.4 H0.5" fill="none" stroke="#666" stroke-width="1.4" stroke-linejoin="round" stroke-linecap="round"/><path d="M6 2 V7.5" fill="none" stroke="#666" stroke-width="1.4" stroke-linejoin="round" stroke-linecap="round"/><path d="M2.8 7 H9.2 L6 11 Z" fill="#666"/></g>
<g transform="translate(1349.0,784.5)"><path d="M-8.3 6.5 L7.2 -9 Q8.2 -10 9.2 -9 L10.8 -7.4 Q11.8 -6.4 10.8 -5.4 L-4.7 10.1 Z M5.4 -7.2 L9 -3.6" fill="none" stroke="#666" stroke-width="1.4" stroke-linejoin="round" stroke-linecap="round"/><path d="M-11 10.7 L-10 6.6 L-7 9.7 Z" fill="#666"/></g>
<g transform="translate(1425.0,784.5)"><path d="M4 7.6 H-12.3 V-11.8 H6 Q7.4 -11.8 7.4 -10.4 V2.5" fill="none" stroke="#666" stroke-width="1.4" stroke-linejoin="round" stroke-linecap="round"/><path d="M-7.5 -2.5 V0 M-2.5 -8 V0 M1.5 -4 V0" fill="none" stroke="#666" stroke-width="1.4" stroke-linejoin="round" stroke-linecap="round"/><path d="M-7.5 2.2 H2.5" stroke="#bbb" stroke-width="1.4"/><path d="M8.5 -8.5 V-4.5 M8.5 -3 V1" stroke="#666" stroke-width="1.6"/><path d="M6.5 3 V8.5" fill="none" stroke="#666" stroke-width="1.4" stroke-linejoin="round" stroke-linecap="round"/><path d="M3 8 H10 L6.5 12 Z" fill="#666"/></g>
<g transform="translate(1483.0,784.5)"><path d="M-9.3 10.4 L-11.3 8.4 V-9.6 Q-11.3 -10.6 -10.3 -10.6 H9.3 Q10.3 -10.6 10.3 -9.6 V9.4 Q10.3 10.4 9.3 10.4 Z" fill="none" stroke="#666" stroke-width="1.4" stroke-linejoin="round" stroke-linecap="round"/><path d="M-7 10.4 V3.5 H3 V10.4" fill="none" stroke="#666" stroke-width="1.4" stroke-linejoin="round" stroke-linecap="round"/><rect x="-4.5" y="5.3" width="4" height="5" fill="#666"/></g>
<g transform="translate(1541.0,784.5)"><rect x="-11.1" y="-10.6" width="21.1" height="21" rx="1" fill="none" stroke="#666" stroke-width="1.4" stroke-linejoin="round" stroke-linecap="round"/><path d="M-7.5 0.5 L-3.5 -2.5 L0 2 L5.5 -4" fill="none" stroke="#666" stroke-width="1.4" stroke-linejoin="round" stroke-linecap="round"/></g>
<g transform="translate(1616.0,784.5)"><path d="M-6.7 4.4 H-11.9 V-8.6 H-8.2 L-6.75 -7.2 H-3.5" fill="none" stroke="#666" stroke-width="1.4" stroke-linejoin="round" stroke-linecap="round"/><path d="M-4.7 10.2 H11.8 V0 H2.5 M-4.7 10.2 V-3.1 H-0.5 L1 -1.2 H3" fill="none" stroke="#666" stroke-width="1.4" stroke-linejoin="round" stroke-linecap="round"/><path d="M0.5 -7.8 H4.5 Q7.5 -7.8 7.5 -4.5 V-2" fill="none" stroke="#666" stroke-width="1.4" stroke-linejoin="round" stroke-linecap="round"/><path d="M-2.3 -7.6 L1.2 -11.2 V-4 Z" fill="#666" stroke="#666" stroke-width="0.6" stroke-linejoin="round"/><path d="M3.5 -2.3 H11.2 L7.35 1.8 Z" fill="#666" stroke="#666" stroke-width="0.6" stroke-linejoin="round"/></g>
<g transform="translate(1674.0,784.5)"><path d="M-8.5 -8.8 H8.2 M-7.4 -8.8 V9.4 Q-7.4 10.4 -6.4 10.4 H6.2 Q7.2 10.4 7.2 9.4 V-8.8 M-2.9 -8.8 V-11.6 H2.75 V-8.8" fill="none" stroke="#666" stroke-width="1.4" stroke-linejoin="round" stroke-linecap="round"/><path d="M-3.3 -3 V4.75 M-0.1 -3 V4.75 M3.1 -3 V4.75" fill="none" stroke="#666" stroke-width="1.4" stroke-linejoin="round" stroke-linecap="round"/></g>
<g transform="translate(1732.0,784.5)"><path d="M-3.1 -2.6 A4.7 4.7 0 1 1 1.3 -2.6 V0.5 L-0.2 1.8 L1.3 3 V4 L-0.2 5.2 L1.3 6.4 V8 L-1.8 10.4 L-3.1 9.3 Z" fill="none" stroke="#666" stroke-width="1.4" stroke-linejoin="round" stroke-linecap="round"/><circle cx="-0.9" cy="-8.3" r="0.8" fill="#666"/><circle cx="8" cy="7.2" r="2.1" fill="none" stroke="#666" stroke-width="1.4" stroke-linejoin="round" stroke-linecap="round"/><path d="M8 2.7 V4.4 M8 10 V11.7 M3.5 7.2 H5.2 M10.8 7.2 H12.5 M4.8 4 L6 5.2 M10 9.2 L11.2 10.4 M11.2 4 L10 5.2 M6 9.2 L4.8 10.4" stroke="#666" stroke-width="1.6"/></g>
<path d="M1194 772.5 V796.5" stroke="#cfcfcf" stroke-width="1"/>
<path d="M1386 772.5 V796.5" stroke="#cfcfcf" stroke-width="1"/>
<path d="M1578 772.5 V796.5" stroke="#cfcfcf" stroke-width="1"/>
<g transform="translate(133,357.0)"><ellipse cx="3.9" cy="-6" rx="1.7" ry="2.2" fill="none" stroke="#666" stroke-width="1.3" stroke-linejoin="round"/><ellipse cx="11.3" cy="-3.9" rx="1.9" ry="2.8" fill="none" stroke="#666" stroke-width="1.3" stroke-linejoin="round"/><ellipse cx="18.6" cy="-6" rx="1.7" ry="2.2" fill="none" stroke="#666" stroke-width="1.3" stroke-linejoin="round"/><path d="M7.1 -0.6 Q6 -1.6 4 -1.6 Q0.6 -1.6 0.6 1 V3 H4.6" fill="none" stroke="#666" stroke-width="1.3" stroke-linejoin="round"/><path d="M15.5 -0.6 Q16.5 -1.6 18.5 -1.6 Q22 -1.6 22 1 V3 H18" fill="none" stroke="#666" stroke-width="1.3" stroke-linejoin="round"/><path d="M7.5 7.5 V4.5 Q7.5 1.9 10.5 1.9 H12.3 Q15.4 1.9 15.4 4.5 V7.5 Z" fill="none" stroke="#666" stroke-width="1.3" stroke-linejoin="round"/></g>
<g transform="translate(133,400.0)"><ellipse cx="3.9" cy="-6" rx="1.7" ry="2.2" fill="none" stroke="#666" stroke-width="1.3" stroke-linejoin="round"/><ellipse cx="11.3" cy="-3.9" rx="1.9" ry="2.8" fill="none" stroke="#666" stroke-width="1.3" stroke-linejoin="round"/><ellipse cx="18.6" cy="-6" rx="1.7" ry="2.2" fill="none" stroke="#666" stroke-width="1.3" stroke-linejoin="round"/><path d="M7.1 -0.6 Q6 -1.6 4 -1.6 Q0.6 -1.6 0.6 1 V3 H4.6" fill="none" stroke="#666" stroke-width="1.3" stroke-linejoin="round"/><path d="M15.5 -0.6 Q16.5 -1.6 18.5 -1.6 Q22 -1.6 22 1 V3 H18" fill="none" stroke="#666" stroke-width="1.3" stroke-linejoin="round"/><path d="M7.5 7.5 V4.5 Q7.5 1.9 10.5 1.9 H12.3 Q15.4 1.9 15.4 4.5 V7.5 Z" fill="none" stroke="#666" stroke-width="1.3" stroke-linejoin="round"/></g>
<g transform="translate(133,443.5)"><ellipse cx="3.9" cy="-6" rx="1.7" ry="2.2" fill="none" stroke="#666" stroke-width="1.3" stroke-linejoin="round"/><ellipse cx="11.3" cy="-3.9" rx="1.9" ry="2.8" fill="none" stroke="#666" stroke-width="1.3" stroke-linejoin="round"/><ellipse cx="18.6" cy="-6" rx="1.7" ry="2.2" fill="none" stroke="#666" stroke-width="1.3" stroke-linejoin="round"/><path d="M7.1 -0.6 Q6 -1.6 4 -1.6 Q0.6 -1.6 0.6 1 V3 H4.6" fill="none" stroke="#666" stroke-width="1.3" stroke-linejoin="round"/><path d="M15.5 -0.6 Q16.5 -1.6 18.5 -1.6 Q22 -1.6 22 1 V3 H18" fill="none" stroke="#666" stroke-width="1.3" stroke-linejoin="round"/><path d="M7.5 7.5 V4.5 Q7.5 1.9 10.5 1.9 H12.3 Q15.4 1.9 15.4 4.5 V7.5 Z" fill="none" stroke="#666" stroke-width="1.3" stroke-linejoin="round"/></g>
<g transform="translate(133,487.0)"><ellipse cx="3.9" cy="-6" rx="1.7" ry="2.2" fill="none" stroke="#666" stroke-width="1.3" stroke-linejoin="round"/><ellipse cx="11.3" cy="-3.9" rx="1.9" ry="2.8" fill="none" stroke="#666" stroke-width="1.3" stroke-linejoin="round"/><ellipse cx="18.6" cy="-6" rx="1.7" ry="2.2" fill="none" stroke="#666" stroke-width="1.3" stroke-linejoin="round"/><path d="M7.1 -0.6 Q6 -1.6 4 -1.6 Q0.6 -1.6 0.6 1 V3 H4.6" fill="none" stroke="#666" stroke-width="1.3" stroke-linejoin="round"/><path d="M15.5 -0.6 Q16.5 -1.6 18.5 -1.6 Q22 -1.6 22 1 V3 H18" fill="none" stroke="#666" stroke-width="1.3" stroke-linejoin="round"/><path d="M7.5 7.5 V4.5 Q7.5 1.9 10.5 1.9 H12.3 Q15.4 1.9 15.4 4.5 V7.5 Z" fill="none" stroke="#666" stroke-width="1.3" stroke-linejoin="round"/></g>
<g fill="none" stroke="#666" stroke-width="1.2" stroke-linejoin="round"><ellipse cx="143.35" cy="521" rx="3" ry="3.6"/><path d="M137.4 537.3 V532.5 Q137.4 528.6 141.4 528.6 H145.4 Q149.4 528.6 149.4 532.5 V537.3 Z"/><circle cx="153.3" cy="527.2" r="2.7"/><path d="M153.3 530 V538.5 M153.3 535.6 H156.5"/></g>
<g transform="translate(148.5,828.5)" fill="none" stroke="#666" stroke-width="1.2" stroke-linejoin="round"><ellipse cx="0.4" cy="-7.1" rx="3.3" ry="3.9"/><path d="M-7 10.5 V6 Q-7 0.9 -2 0.9 H3 Q7.9 0.9 7.9 6 V10.5 Z"/><path d="M-6.5 10.2 H7.4" stroke-width="1.6"/></g>
<g transform="translate(148.5,872.5)" fill="none" stroke="#666" stroke-width="1.2" stroke-linejoin="round"><ellipse cx="0.4" cy="-7.1" rx="3.3" ry="3.9"/><path d="M-7 10.5 V6 Q-7 0.9 -2 0.9 H3 Q7.9 0.9 7.9 6 V10.5 Z"/><path d="M-6.5 10.2 H7.4" stroke-width="1.6"/></g>
<path d="M35 27.5 L45.5 38 L35 48.5" fill="none" stroke="#7a7a7a" stroke-width="1.5"/>
<path d="M32.4 109.9 H43.4 M37.9 104.4 V115.4" stroke="#e8965a" stroke-width="2.0"/>
<path d="M24.2 101.7 H34.2 M29.2 96.7 V106.7" stroke="#e9b150" stroke-width="1.7"/>
<path d="M41.8 101.7 H51.8 M46.8 96.7 V106.7" stroke="#8eaebd" stroke-width="1.7"/>
<path d="M24.2 117.9 H34.2 M29.2 112.9 V122.9" stroke="#d6607a" stroke-width="1.7"/>
<path d="M41.8 117.9 H51.8 M46.8 112.9 V122.9" stroke="#6079aa" stroke-width="1.7"/>
<path d="M34.8 96.6 H41.0 M37.9 93.5 V99.69999999999999" stroke="#a9c3cc" stroke-width="1.4"/>
<path d="M21.2 109.9 H27.400000000000002 M24.3 106.80000000000001 V113.0" stroke="#b4cdd4" stroke-width="1.4"/>
<path d="M48.4 109.9 H54.6 M51.5 106.80000000000001 V113.0" stroke="#9494c0" stroke-width="1.4"/>
<path d="M34.8 122.8 H41.0 M37.9 119.7 V125.89999999999999" stroke="#a3a3c6" stroke-width="1.4"/>
<rect x="34.5" y="176" width="21.5" height="19" rx="1" fill="none" stroke="#8c8c8c" stroke-width="1.4" stroke-linejoin="round" stroke-linecap="round"/><path d="M34.5 181.3 H56" fill="none" stroke="#8c8c8c" stroke-width="1.4" stroke-linejoin="round" stroke-linecap="round"/><path d="M36.7 178.8 H38.8 M40.6 178.8 H42.7 M44.6 178.8 H46.7" stroke="#8c8c8c" stroke-width="1.4"/>
<path d="M65 184 L74 184 L69.5 190.3 Z" fill="#8c8c8c"/>
<g transform="translate(43.6,283.4)"><path d="M-11 0 L0 -10.8 L11 0 M-8.5 -2 V11 H-3.5 V4 H3.5 V11 H8.5 V-2" fill="none" stroke="#8c8c8c" stroke-width="1.4" stroke-linejoin="round" stroke-linecap="round"/></g>
<g transform="translate(44.5,338.5)"><path d="M0 -11.5 L3.2 -4.3 L11.5 -3.7 L5.2 2 L7.2 10.6 L0 6.2 L-7.2 10.6 L-5.2 2 L-11.5 -3.7 L-3.2 -4.3 Z" fill="none" stroke="#8c8c8c" stroke-width="1.4" stroke-linejoin="round" stroke-linecap="round"/></g>
<g transform="translate(45.5,391.3)"><path d="M-10 0 A10.5 10.5 0 1 1 -6 8" fill="none" stroke="#8c8c8c" stroke-width="1.4" stroke-linejoin="round" stroke-linecap="round"/><path d="M0 -6 V1 L4.5 4" fill="none" stroke="#8c8c8c" stroke-width="1.4" stroke-linejoin="round" stroke-linecap="round"/><path d="M-13.5 -1 L-7 -1 L-10.2 3.5 Z" fill="#8c8c8c"/></g>
<g transform="translate(44,446)"><ellipse cx="-7" cy="-8" rx="2.3" ry="2.8" fill="none" stroke="#8c8c8c" stroke-width="1.4" stroke-linejoin="round" stroke-linecap="round"/><ellipse cx="5.5" cy="-3" rx="2.3" ry="2.8" fill="none" stroke="#8c8c8c" stroke-width="1.4" stroke-linejoin="round" stroke-linecap="round"/><path d="M-4 -2 Q-6.5 -3 -9 -2 Q-11.5 -1 -11.5 2 V3.5 H-8" fill="none" stroke="#8c8c8c" stroke-width="1.4" stroke-linejoin="round" stroke-linecap="round"/><path d="M-8 3.5 V7 H2" fill="none" stroke="#8c8c8c" stroke-width="1.4" stroke-linejoin="round" stroke-linecap="round"/><path d="M0 4.5 L3 7 L0 9.5" fill="none" stroke="#8c8c8c" stroke-width="1.4" stroke-linejoin="round" stroke-linecap="round"/><path d="M0 11 H12 V6 Q12 2.5 8 2.5 H3" fill="none" stroke="#8c8c8c" stroke-width="1.4" stroke-linejoin="round" stroke-linecap="round"/></g>
<g transform="translate(44.5,500)"><path d="M-3.6 5 V3 A7.8 7.8 0 1 1 3.6 3 V5 Z" fill="none" stroke="#8c8c8c" stroke-width="1.4" stroke-linejoin="round" stroke-linecap="round"/><path d="M-3 8 H3 M-1.8 10.5 H1.8" fill="none" stroke="#8c8c8c" stroke-width="1.4" stroke-linejoin="round" stroke-linecap="round"/></g>
<g transform="translate(44.5,598)"><circle cx="0" cy="0" r="11.8" fill="none" stroke="#8c8c8c" stroke-width="1.4" stroke-linejoin="round" stroke-linecap="round"/><ellipse cx="0" cy="-3.5" rx="3.3" ry="3.8" fill="none" stroke="#8c8c8c" stroke-width="1.4" stroke-linejoin="round" stroke-linecap="round"/><path d="M-7.5 8 Q-5 3 0 3 Q5 3 7.5 8" fill="none" stroke="#8c8c8c" stroke-width="1.4" stroke-linejoin="round" stroke-linecap="round"/></g>
<g transform="translate(44.5,652)"><rect x="-11" y="-10.5" width="22" height="21.5" rx="1" fill="none" stroke="#8c8c8c" stroke-width="1.4" stroke-linejoin="round" stroke-linecap="round"/><rect x="-7.5" y="-7" width="5.5" height="5.5" fill="none" stroke="#8c8c8c" stroke-width="1.4" stroke-linejoin="round" stroke-linecap="round"/><rect x="-7.5" y="1.5" width="5.5" height="5.5" fill="none" stroke="#8c8c8c" stroke-width="1.4" stroke-linejoin="round" stroke-linecap="round"/><rect x="2" y="1.5" width="5.5" height="5.5" fill="none" stroke="#8c8c8c" stroke-width="1.4" stroke-linejoin="round" stroke-linecap="round"/><path d="M4.8 -7.5 V-1 M1.5 -4.2 H8" fill="none" stroke="#8c8c8c" stroke-width="1.4" stroke-linejoin="round" stroke-linecap="round"/></g>
<g transform="translate(43.7,705.4)"><circle cx="0" cy="0" r="11" fill="none" stroke="#6a6a6a" stroke-width="1.5"/><path d="M2 -5.2 V1.1 L-1.6 4.4 V-1.9 Z" fill="none" stroke="#6a6a6a" stroke-width="1.2" stroke-linejoin="round"/><path d="M-2 -11 H2 L0 -8 Z M-2 11 H2 L0 8 Z M-11 -2 V2 L-8 0 Z M11 -2 V2 L8 0 Z" fill="#6a6a6a"/></g>
<g transform="translate(44,804)"><rect x="-11" y="-5" width="22" height="16" rx="1" fill="none" stroke="#8c8c8c" stroke-width="1.4" stroke-linejoin="round" stroke-linecap="round"/><path d="M-10 -5 V-8 H10 V-5 M-8.5 -8 V-11 H8.5 V-8" fill="none" stroke="#8c8c8c" stroke-width="1.4" stroke-linejoin="round" stroke-linecap="round"/><rect x="-3" y="-1.5" width="6" height="2.3" rx="1" fill="none" stroke="#8c8c8c" stroke-width="1.4" stroke-linejoin="round" stroke-linecap="round"/></g>
<g><circle cx="40.5" cy="896.5" r="3.5" fill="none" stroke="#8c8c8c" stroke-width="1.4" stroke-linejoin="round" stroke-linecap="round"/><circle cx="50.8" cy="895.1" r="3" fill="none" stroke="#8c8c8c" stroke-width="1.4" stroke-linejoin="round" stroke-linecap="round"/><path d="M32.2 913.7 V911 Q32.2 904 40.5 904 Q48.7 904 48.7 911 V913.7 Z" fill="none" stroke="#8c8c8c" stroke-width="1.4" stroke-linejoin="round" stroke-linecap="round"/><path d="M47.5 903.3 Q49 902.6 51 902.6 Q56.3 902.8 56.3 907.5 V909.5 H50" fill="none" stroke="#8c8c8c" stroke-width="1.4" stroke-linejoin="round" stroke-linecap="round"/></g>
<g><ellipse cx="36.1" cy="950.8" rx="2.1" ry="2.6" fill="none" stroke="#8c8c8c" stroke-width="1.4" stroke-linejoin="round" stroke-linecap="round"/><ellipse cx="44.3" cy="952.2" rx="2.2" ry="2.8" fill="none" stroke="#8c8c8c" stroke-width="1.4" stroke-linejoin="round" stroke-linecap="round"/><ellipse cx="52.9" cy="950.8" rx="2.1" ry="2.6" fill="none" stroke="#8c8c8c" stroke-width="1.4" stroke-linejoin="round" stroke-linecap="round"/><path d="M38.5 958.3 Q37.5 957.6 36 957.6 Q32.5 957.8 32.5 960.5 V963.2 H37.2" fill="none" stroke="#8c8c8c" stroke-width="1.4" stroke-linejoin="round" stroke-linecap="round"/><path d="M50.1 958.3 Q51.1 957.6 52.6 957.6 Q56.1 957.8 56.1 960.5 V963.2 H51.4" fill="none" stroke="#8c8c8c" stroke-width="1.4" stroke-linejoin="round" stroke-linecap="round"/><path d="M39.4 965.2 V963 Q39.4 959 44.6 959 Q49.8 959 49.8 963 V965.2 Z" fill="none" stroke="#8c8c8c" stroke-width="1.4" stroke-linejoin="round" stroke-linecap="round"/></g>
<g><path d="M32.5 1021 V1001 H55.3 V1021" fill="none" stroke="#8c8c8c" stroke-width="1.4" stroke-linejoin="round" stroke-linecap="round"/><path d="M32.5 1005.8 H55.3 M39.4 997.5 V1003 M48 997.5 V1003" fill="none" stroke="#8c8c8c" stroke-width="1.4" stroke-linejoin="round" stroke-linecap="round"/><circle cx="38" cy="1009.5" r="0.8" fill="#8c8c8c"/><circle cx="44" cy="1009.5" r="0.8" fill="#8c8c8c"/><circle cx="49.5" cy="1009.5" r="0.8" fill="#8c8c8c"/><circle cx="38" cy="1016" r="0.8" fill="#8c8c8c"/><circle cx="44" cy="1016" r="0.8" fill="#8c8c8c"/><path d="M48 1021 V1016 H55" fill="none" stroke="#8c8c8c" stroke-width="1.4" stroke-linejoin="round" stroke-linecap="round"/></g>
<path d="M84 19 L95 19 L89.5 13 Z" fill="#a8a8a8"/>
<path d="M84 1009 L95 1009 L89.5 1015 Z" fill="#a0a0a0"/>
<path d="M1819 238.5 L1828 238.5 L1823.5 245 Z" fill="#8c8c8c"/>
<path d="M1858 233.5 H1873 L1867.3 240.5 V246 Q1867.3 247.5 1865.5 247.5 Q1863.7 247.5 1863.7 246 V240.5 Z" fill="none" stroke="#8c8c8c" stroke-width="1.3" stroke-linejoin="round"/>
</svg>
</body></html>
